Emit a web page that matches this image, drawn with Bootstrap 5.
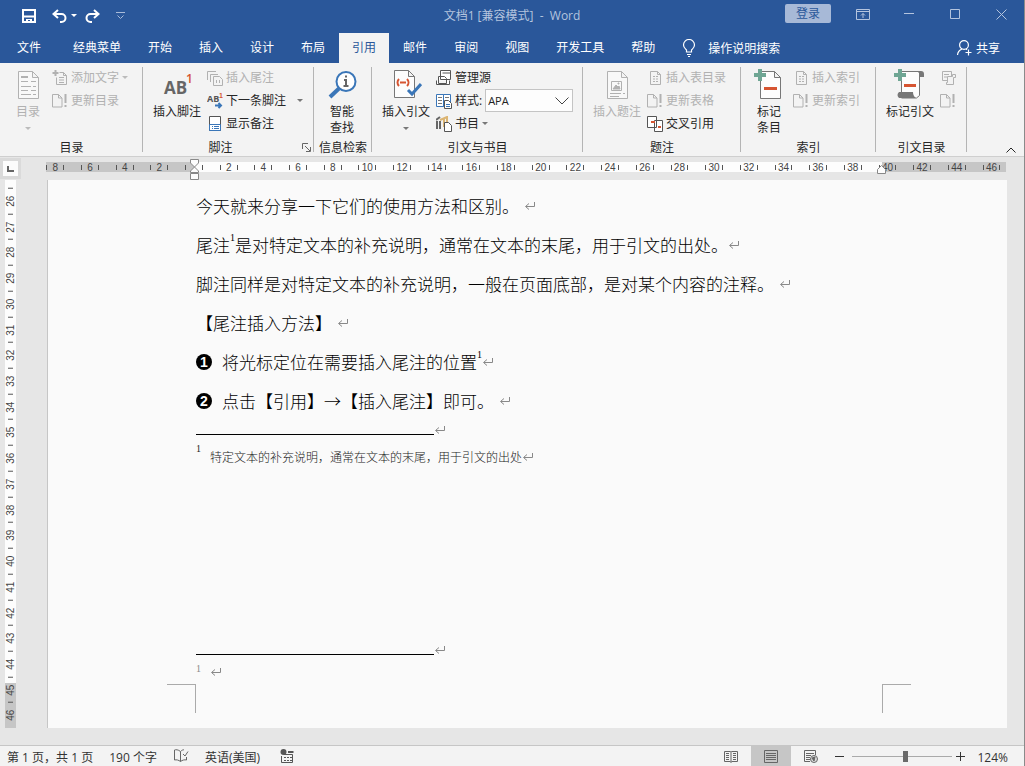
<!DOCTYPE html>
<html lang="zh-CN">
<head>
<meta charset="utf-8">
<meta name="viewport" content="width=device-width, initial-scale=1">
<title>文档1 [兼容模式] - Word</title>
<link href="https://cdn.jsdelivr.net/npm/bootstrap@5.3.0/dist/css/bootstrap.min.css" rel="stylesheet">
<style>
:root { --word-blue: #2a579a; --ribbon: #f3f3f3; --ink: #262626; --off: #b1b1b1; --line: #b4b4b4; }
body { font: 12px/16px "Open Sans", "Noto Sans CJK SC", sans-serif; color: var(--ink); background: #e6e6e6; }
button { border: 0; background: none; padding: 0; color: inherit; font: inherit; }
svg { display: block; flex: none; fill: none; }
svg:not([stroke]) { stroke: currentColor; }
.win { height: 100vh; overflow: hidden; border-right: 1px solid #8a8a8a; }

.titlebar { height: 31px; color: #b4c4de; background: var(--word-blue); }
.titlebar .side { flex: 1 1 0; height: 31px; }
.qat { color: #fff; }
.qat::before { content: ""; width: 22px; }
.login { width: 46px; height: 19px; background: #a7b9d7; color: var(--word-blue); border-radius: 2px; margin-right: 9px; }
.winbtn { width: 46px; height: 28px; display: grid; place-items: center; }

.tabs { height: 32px; padding-top: 2px; background: var(--word-blue); color: #fff; gap: 1px; }
.tabs .tab { padding: 0 13px; height: 30px; line-height: 29px; color: #fff; text-decoration: none; white-space: nowrap; }
.tabs .tab.file { padding: 0 18px 0 17px; }
.tabs .tab.active { background: var(--ribbon); color: var(--word-blue); }
.tabs .tell { gap: 12px; }
.tabs .share { margin-right: 11px; gap: 4px; }

.ribbon { height: 94px; background: var(--ribbon); border-bottom: 1px solid #cfcfcf; display: grid; grid-template-columns: 143px 171px 58px 211px 158px 135px 91px 1fr; }
.group { position: relative; padding-top: 3px; }
.group:not(:last-child)::after { content: ""; position: absolute; right: 0; top: 4px; bottom: 4px; width: 1px; background: var(--line); }
.tools { height: 72px; padding-left: 10px; gap: 6px; }
.tight .tools { padding-left: 4px; gap: 0; }
.caption { line-height: 20px; margin-bottom: -2px; text-align: center; }
.big { width: 48px; padding-top: 3px; white-space: nowrap; display: flex; flex-direction: column; align-items: center; gap: 3px; line-height: 16px; }
.small-tool { height: 23px; display: flex; align-items: center; gap: 3px; white-space: nowrap; }
.off { color: var(--off); }
.caret { display: inline-block; border: 3px solid transparent; border-top-color: #777; border-bottom: 0; }
.off .caret, .caret.off { border-top-color: #bbb; }
.qat .caret { border-top-color: #fff; }
.big .caret { margin-top: 4px; }
.launcher { position: absolute; right: 3px; bottom: 4px; }
.style-pick { width: 88px; height: 23px; font-size: 11px; padding: 0 2px; color: #222; border: 1px solid #c4c4c4; background: #fdfdfd url("data:image/svg+xml,%3Csvg xmlns='http://www.w3.org/2000/svg' width='14' height='8'%3E%3Cpath d='M.5.5 7 7 13.5.5' fill='none' stroke='%23444'/%3E%3C/svg%3E") no-repeat right 3px center; appearance: none; }
.fold { position: absolute; right: 8px; bottom: 3px; }

.hruler { height: 23px; padding: 5px 15px 0 38px; position: relative; }
.corner { position: absolute; left: 3px; top: 4px; width: 15px; height: 15px; background: #fcfcfc; box-shadow: 0 0 0 3px #dadada; }
.hscale { height: 10px; display: flex; font: 10px/11px "Liberation Sans", sans-serif; color: #444; background: linear-gradient(90deg, transparent 8px, #c6c6c6 8px, #c6c6c6 156px, #fdfdfd 156px, #fdfdfd calc(100% - 127px), #c6c6c6 calc(100% - 127px), #c6c6c6 calc(100% - 3px), transparent 0); }
.hscale span { flex: 1 1 0; text-align: center; background: linear-gradient(#555, #555) 25% 3px / 1px 5px no-repeat, linear-gradient(#555, #555) 75% 3px / 1px 5px no-repeat; }
.marker { position: absolute; top: 2px; left: 189px; }
.marker.end { left: auto; right: 137px; top: 8px; }

.work { min-height: 0; padding-bottom: 17px; }
.vscale { width: 11px; margin: 0 31px 0 5px; padding-top: 8px; display: flex; flex-direction: column; font: 10px/11px "Liberation Sans", sans-serif; color: #444; background: linear-gradient(0deg, #c6c6c6 45px, #fdfdfd 45px); }
.vscale span { flex: 1 1 0; writing-mode: vertical-rl; transform: rotate(180deg); text-align: center; background: linear-gradient(#555, #555) 50% 100% / 5px 1px no-repeat; }
.sheet { background: #fafafa; border-left: 1px solid #c6c6c6; margin-right: 17px; padding: 6px 0 15px 148px; color: #000; font-family: "Noto Sans CJK SC", sans-serif; font-weight: 300; overflow: hidden; }
.sheet p { margin: 0; font-size: 17px; line-height: 39px; white-space: nowrap; display: flex; align-items: center; }
.sheet sup { font: 10px/12px "Liberation Serif", serif; top: 0; align-self: flex-start; padding-top: 7px; }
.sheet .ret { color: #888; margin-left: 5px; }
.sheet sup + .ret { margin-left: 0; }
.disc { width: 16px; height: 16px; border-radius: 50%; background: #000; color: #fff; font: bold 14px/16px "Liberation Sans", sans-serif; text-align: center; margin-right: 10px; }
.notebar { display: flex; align-items: flex-end; height: 15px; color: #888; }
.notebar::before { content: ""; width: 238px; border-top: 1px solid #000; }
.sheet .note { font-size: 12px; line-height: 44px; color: #222; }
.sheet .note .ret { margin-left: 0; }
.sheet .note sup { padding-top: 8px; margin-right: 9px; }
.sheet .note.blank { height: 29px; padding-top: 4px; }
.sheet .note.blank sup { padding-top: 4px; color: #888; }
.cropmarks { display: flex; justify-content: space-between; margin: 0 96px 0 -29px; }
.cropmarks i { width: 29px; height: 29px; border: solid #aaa; border-width: 1px 1px 0 0; }
.cropmarks i:last-child { border-width: 1px 0 0 1px; }

.status { height: 21px; background: var(--ribbon); border-top: 1px solid #c6c6c6; padding: 0 16px 0 7px; white-space: nowrap; overflow: hidden; color: #333; }
.status .say { line-height: 24px; height: 20px; }
.status .view { width: 40px; height: 21px; display: grid; place-items: center; color: #666; }
.status .view.active { background: #c6c6c6; }
.zoomer { width: 100px; height: 12px; appearance: none; background: linear-gradient(#aaa, #aaa) 0 50% / 100% 1px no-repeat; }
.zoomer::-webkit-slider-thumb { appearance: none; width: 5px; height: 11px; background: #6a6a6a; }
</style>
</head>
<body>
<svg class="d-none" aria-hidden="true">
  <symbol id="ret" viewBox="0 0 12 10"><path d="M10.500 1v4.500H2M5 2.500l-3.500 3L5 8.500"/></symbol>
  <symbol id="doc" viewBox="0 0 16 16"><path d="M3.500 1.500h7l3 3v10h-10zM10.500 1.500v3h3M6 6.500h2M9 6.500h2M6 9h2M9 9h2M6 11.500h2M9 11.500h2"/></symbol>
  <symbol id="upd" viewBox="0 0 16 16"><path d="M.5 1.500h6l3.500 3.500v9H.5zM6.500 1.500V5H10"/><path stroke-width="2" d="M13.500 1v9M13.500 12v2"/></symbol>
</svg>
<div class="win d-flex flex-column">
  <header class="titlebar d-flex align-items-center">
    <div class="side qat d-flex align-items-center">
      <button aria-label="保存" class="me-3"><svg width="14" height="14"><path stroke-width="2" d="M1 1h12v12H1z"/><path stroke-width="2" d="M2 7.500h10"/><path fill="currentColor" stroke="none" d="M4 10h6v3H8v-2H6v2H4z"/></svg></button>
      <button aria-label="撤消" class="me-1"><svg width="15" height="14"><path stroke-width="2" d="M6 1 1.500 5 6 9M2 5h7.500a4 4 0 0 1 0 8H8"/></svg></button>
      <button aria-label="撤消选项" class="d-flex"><span class="caret"></span></button>
      <button aria-label="恢复" class="ms-2"><svg width="15" height="14"><path stroke-width="2" d="M9 1l4.500 4L9 9M13 5H5.500a4 4 0 0 0 0 8H7"/></svg></button>
      <button aria-label="自定义快速访问工具栏" class="ms-3"><svg width="9" height="8" stroke="#a9bbd9"><path d="M0 .5h9M1.500 3.500l3 3 3-3"/></svg></button>
    </div>
    <div>文档1 [兼容模式]&nbsp; -&nbsp; Word</div>
    <div class="side d-flex justify-content-end">
      <button class="login mt-1">登录</button>
      <button class="winbtn" aria-label="功能区显示选项"><svg width="14" height="11"><path d="M.5.5h13v10H.5zM1 2.500h12M7 9V4.500M5 6.500l2-2 2 2"/></svg></button>
      <button class="winbtn" aria-label="最小化"><svg width="10" height="2"><path d="M0 .5h10"/></svg></button>
      <button class="winbtn" aria-label="最大化"><svg width="10" height="10"><path d="M.5.5h9v9h-9z"/></svg></button>
      <button class="winbtn" aria-label="关闭"><svg width="11" height="11"><path d="m.5.5 10 10m0-10-10 10"/></svg></button>
    </div>
  </header>

  <nav class="tabs d-flex">
    <a class="tab file" href="#">文件</a><a class="tab" href="#">经典菜单</a><a class="tab" href="#">开始</a><a class="tab" href="#">插入</a><a class="tab" href="#">设计</a><a class="tab" href="#">布局</a><a class="tab active" href="#">引用</a><a class="tab" href="#">邮件</a><a class="tab" href="#">审阅</a><a class="tab" href="#">视图</a><a class="tab" href="#">开发工具</a><a class="tab" href="#">帮助</a>
    <a class="tab tell d-flex align-items-center" href="#"><svg width="14" height="18" viewBox="0 0 14 18"><path stroke-width="1.200" d="M4.500 13v-2C3 9.500 1.500 8.500 1.500 6a5.500 5.500 0 0 1 11 0c0 2.500-1.500 3.500-3 5v2zM5 15.500h4M6 17.500h2"/></svg><span>操作说明搜索</span></a>
    <a class="tab share ms-auto d-flex align-items-center" href="#"><svg width="15" height="16" viewBox="0 0 15 16"><circle cx="7" cy="5" r="4.400" stroke-width="1.200"/><path stroke-width="1.200" d="M.5 15c.3-3.500 2-5 4.500-6M9 9l1 .8M11.500 9.500v6M8.500 12.500h6"/></svg><span>共享</span></a>
  </nav>

  <div class="ribbon">
    <section class="group tight">
      <div class="tools d-flex">
        <button class="big off"><svg width="32" height="32"><path fill="#f8f8f8" d="M6.500 2.500h14l6 6v21h-20zM20.500 2.500v6h6"/><path d="M9 12.500h7M19 12.500h5M9 17.500h10M21 17.500h3M9 21.500h7M19 21.500h5M9 25.500h10M21 25.500h3"/><path stroke-width="2" d="M9 8h7"/></svg><span>目录</span><span class="caret"></span></button>
        <div class="off">
          <button class="small-tool"><svg width="16" height="16"><path stroke-width="2" d="M3.500 0v6M.5 3h6"/><path d="M4.500 7.500v7h10v-9l-3-3h-4M11.500 2.500v3h3M7 7.500h5M7 10h5M7 12.500h5"/></svg>添加文字<span class="caret"></span></button>
          <button class="small-tool"><svg width="16" height="16"><use href="#upd"/></svg>更新目录</button>
        </div>
      </div>
      <div class="caption">目录</div>
    </section>

    <section class="group">
      <div class="tools d-flex">
        <button class="big"><svg width="32" height="32" stroke="none"><text x="3" y="25" font-family="Open Sans" font-weight="700" font-size="17" fill="#666">AB</text><text x="25" y="14" font-family="Open Sans" font-size="12" font-weight="600" fill="#d65532">1</text></svg><span>插入脚注</span></button>
        <div>
          <button class="small-tool off"><svg width="16" height="16"><path d="M.5 10V1.500H9M3.500 12V4.500H11M6.500 6.500h6l3 3v6h-9zM9.500 10v3M12.500 10v3"/></svg>插入尾注</button>
          <button class="small-tool"><svg width="16" height="16"><text x="0" y="9" stroke="none" font-family="Open Sans" font-weight="700" font-size="9" fill="#555">AB</text><text x="12" y="5" stroke="none" font-family="Liberation Sans" font-weight="700" font-size="7" fill="#d65532">1</text><path stroke="#3a76b8" stroke-width="2" d="M8 12.500h6M11.500 10 14 12.500 11.500 15"/></svg>下一条脚注<span class="caret ms-2"></span></button>
          <button class="small-tool"><svg width="16" height="16"><path stroke="#555" fill="#fff" d="M2.500.5h11v14h-11z"/><path stroke="#3a76b8" d="M2.500 8.500v6h11v-6zM5 10.500h1M7 10.500h5M5 12.500h1M7 12.500h5"/></svg>显示备注</button>
        </div>
      </div>
      <div class="caption me-3">脚注</div>
      <button class="launcher" aria-label="脚注和尾注"><svg width="9" height="9" stroke="#666"><path d="M.5 6V.5H6M3 3l5 5M8.500 4v4.500H4"/></svg></button>
    </section>

    <section class="group tight">
      <div class="tools d-flex"><button class="big"><svg width="32" height="32"><circle cx="20" cy="12.500" r="9.500" stroke="#3a76b8" stroke-width="2" fill="#fff"/><path stroke="#3a76b8" stroke-width="4" d="m13 19.500-9 8.500"/><path stroke="#666" stroke-width="2" d="M20 6.500v2M18 11h2v6M17.500 17h5"/></svg><span>智能<br>查找</span></button></div>
      <div class="caption">信息检索</div>
    </section>

    <section class="group">
      <div class="tools d-flex">
        <button class="big"><svg width="32" height="32"><path stroke="#777" fill="#fdfdfd" d="M4.500 1.500h14l6 6v21h-20zM18.500 1.500v6h6"/><path stroke="#d65532" stroke-width="2" d="M9 10c-2 2-2 5 0 7M17 10c2 2 2 5 0 7M10 13.500h6"/><path stroke="#3a76b8" stroke-width="3" d="m18 21 4 4 9-10"/></svg><span>插入引文</span><span class="caret"></span></button>
        <div>
          <button class="small-tool"><svg width="16" height="16" stroke="#555"><path fill="#fff" d="M4.500.5h10v9h-10zM2.500 6.500h6l2 2v5h-8zM.5 10.500v4h13v-4M6.500 3h8"/></svg>管理源</button>
          <div class="small-tool"><svg width="16" height="16"><path stroke="#3a76b8" fill="#fff" d="M.5 1.500h7v12h-7zM7.500 1.500h7v12h-7z"/><path stroke="#777" d="M2 4.500h4M2 7.500h4M2 10.500h4M9 4.500h4"/><path stroke="#555" fill="#fff" d="M8.500 7.500h4l3 3v5h-7z"/><path stroke="#3a76b8" d="M10 11.500h4M10 13.500h4"/></svg><label for="citeStyle">样式:</label><select id="citeStyle" class="style-pick"><option>APA</option></select></div>
          <button class="small-tool"><svg width="16" height="16"><path stroke="#666" stroke-width="2" d="M1 5v8M4 5v8M0 4l4-3"/><path stroke="#dcb573" stroke-width="2" d="M4 4l7-3v5M8 3v8M11 1v5"/><path stroke="#555" fill="#fff" d="M8.500 6.500h4l3 3v6h-7z"/></svg>书目<span class="caret"></span></button>
        </div>
      </div>
      <div class="caption">引文与书目</div>
    </section>

    <section class="group">
      <div class="tools d-flex">
        <button class="big off"><svg width="32" height="32"><path fill="#f8f8f8" d="M6.500 2.500h14l6 6v21h-20zM20.500 2.500v6h6M10.500 12.500h10v9h-10z"/><path d="M9 24.500h11M22 24.500h2M9 27.500h9"/><path fill="currentColor" d="m12 20 3-4 2 2 1-1 1 3zM17 14h1v1h-1z"/></svg><span>插入题注</span></button>
        <div>
          <button class="small-tool off"><svg width="16" height="16"><use href="#doc"/></svg>插入表目录</button>
          <button class="small-tool off"><svg width="16" height="16"><use href="#upd"/></svg>更新表格</button>
          <button class="small-tool"><svg width="16" height="16"><path stroke="#555" fill="#fff" d="M7.500 4.500h8v11h-8zM.5.5h9v11h-9z"/><path stroke="#d65532" stroke-width="2" d="M4 6h4M11 11h3"/></svg>交叉引用</button>
        </div>
      </div>
      <div class="caption">题注</div>
    </section>

    <section class="group tight">
      <div class="tools d-flex">
        <button class="big"><svg width="32" height="32"><path stroke="#777" fill="#fdfdfd" d="M7.500 2.500h14l6 6v21h-20zM21.500 2.500v6h6"/><path stroke="#d65532" stroke-width="3" d="M11 19.500h13"/><path stroke="#6fa694" stroke-width="4" d="M7 0v12M1 6h12"/></svg><span>标记<br>条目</span></button>
        <div class="off">
          <button class="small-tool"><svg width="16" height="16"><use href="#doc"/></svg>插入索引</button>
          <button class="small-tool"><svg width="16" height="16"><use href="#upd"/></svg>更新索引</button>
        </div>
      </div>
      <div class="caption">索引</div>
    </section>

    <section class="group">
      <div class="tools d-flex">
        <button class="big"><svg width="32" height="32"><path stroke="#777" fill="#fdfdfd" d="M7.500 2.500h18v24l-3 2.500h-15z"/><path stroke="none" fill="#777" d="M23 2h4q3 0 3 3v3h-4V5zM5 23h14q0 4 3 6H5q-3-3 0-6z"/><path stroke="#d65532" stroke-width="3" d="M10 16.500h12"/><path stroke="#6fa694" stroke-width="4" d="M6 0v12M0 6h12"/></svg><span>标记引文</span></button>
        <div class="off">
          <button class="small-tool" aria-label="插入引文目录"><svg width="16" height="16"><path d="M2.500 1.500h9v9h-9zM4 4.500h5M4 7h3"/><path fill="#f3f3f3" d="M7.500 6.500h5v-2h3v3h-2v7h-7v-2h1z"/></svg></button>
          <button class="small-tool" aria-label="更新引文目录"><svg width="16" height="16"><use href="#upd"/></svg></button>
        </div>
      </div>
      <div class="caption">引文目录</div>
    </section>
    <div class="group"><button class="fold" aria-label="折叠功能区"><svg width="10" height="6"><path d="m.5 5.500 4.500-4.500 4.500 4.500"/></svg></button></div>
  </div>

  <div class="hruler">
    <div class="corner"><svg width="15" height="15"><path stroke="#666" stroke-width="2" d="M5 5v5h6"/></svg></div>
    <div class="hscale" id="hscale"></div>
    <svg class="marker" width="11" height="22" stroke="#888"><path fill="#fdfdfd" d="M1.500.5h8V4L5.500 8 1.500 4zM5.500 8l4 4v1.500h-8V12zM1.500 14.500h8v6h-8z"/></svg>
    <svg class="marker end" width="11" height="9" stroke="#888"><path fill="#fdfdfd" d="m5.500.5 4 4v4h-8v-4z"/></svg>
  </div>

  <main class="work d-flex flex-grow-1">
    <div class="vscale" id="vscale"></div>
    <article class="sheet flex-grow-1 d-flex flex-column">
      <p>今天就来分享一下它们的使用方法和区别。<svg class="ret" width="12" height="10"><use href="#ret"/></svg></p>
      <p>尾注<sup>1</sup>是对特定文本的补充说明，通常在文本的末尾，用于引文的出处。<svg class="ret" width="12" height="10"><use href="#ret"/></svg></p>
      <p>脚注同样是对特定文本的补充说明，一般在页面底部，是对某个内容的注释。<svg class="ret" width="12" height="10"><use href="#ret"/></svg></p>
      <p>【尾注插入方法】<svg class="ret" width="12" height="10"><use href="#ret"/></svg></p>
      <p><span class="disc">1</span>将光标定位在需要插入尾注的位置<sup>1</sup><svg class="ret" width="12" height="10"><use href="#ret"/></svg></p>
      <p><span class="disc">2</span>点击【引用】→【插入尾注】即可。<svg class="ret" width="12" height="10"><use href="#ret"/></svg></p>
      <div class="notebar"><svg width="12" height="10"><use href="#ret"/></svg></div>
      <p class="note"><sup>1</sup>特定文本的补充说明，通常在文本的末尾，用于引文的出处<svg class="ret" width="12" height="10"><use href="#ret"/></svg></p>
      <div class="notebar mt-auto"><svg width="12" height="10"><use href="#ret"/></svg></div>
      <p class="note blank"><sup>1</sup><svg class="ret" width="12" height="10"><use href="#ret"/></svg></p>
      <div class="cropmarks"><i></i><i></i></div>
    </article>
  </main>

  <footer class="status d-flex align-items-center">
    <span class="say me-3">第 1 页，共 1 页</span>
    <span class="say me-3">190 个字</span>
    <button class="me-3" aria-label="校对"><svg width="16" height="14" stroke="#666"><path d="M7.500 2.500C5 .5 3 .5 1.500 1v10c2-.5 4 0 6 1.500V2.500C9 1 10 .8 11 .8M7.500 12.500c2-1.500 4-2 6-1.500V8M10 5l2 2 3-4.500"/></svg></button>
    <span class="say me-3">英语(美国)</span>
    <button class="ms-1" aria-label="宏"><svg width="14" height="14"><circle cx="3.500" cy="3" r="3" fill="#555" stroke="none"/><path stroke="#555" d="M1.500 7v6.500h11V5.500H4"/><path stroke="#555" stroke-width="2" d="M8 3h5.500"/><path stroke="#555" stroke-dasharray="2 1" d="M4 8.500h8M4 11.500h8"/></svg></button>
    <div class="ms-auto d-flex align-items-center">
      <button class="view" aria-label="阅读视图"><svg width="14" height="13"><path d="M6.500 1.500h-6v10h6M7.500 1.500h6v10h-6M7 1v12M2 3.500h3M2 5.500h3M2 7.500h3M2 9.500h3M9 3.500h3M9 5.500h3M9 7.500h3M9 9.500h3"/></svg></button>
      <button class="view active" aria-label="页面视图"><svg width="14" height="13"><path d="M.5.5h13v12H.5zM2 3.500h10M2 5.500h10M2 7.500h10M2 9.500h10"/></svg></button>
      <button class="view" aria-label="Web 版式视图"><svg width="14" height="13"><path d="M6 11.500H.5V.5h11V5M2 3.500h8M2 5.500h5M2 7.500h4M2 9.500h4"/><circle cx="10" cy="9" r="3.500" fill="#ddd"/><path fill="#666" d="m8 8 3-1-1 4z"/></svg></button>
      <button class="ms-1 me-2" aria-label="缩小"><svg width="9" height="9"><path d="M0 4.500h9"/></svg></button>
      <input class="zoomer" type="range" min="0" max="100" value="53" aria-label="显示比例">
      <button class="ms-1 me-2 pe-1" aria-label="放大"><svg width="9" height="9"><path d="M0 4.500h9M4.500 0v9"/></svg></button>
      <span class="say">124%</span>
    </div>
  </footer>
</div>
<script src="https://cdn.jsdelivr.net/npm/bootstrap@5.3.0/dist/js/bootstrap.bundle.min.js"></script>
<script>
const fill = (id, from, to, step) => {
  const scale = document.getElementById(id);
  for (let n = from; n <= to; n += step) {
    const cell = document.createElement("span");
    cell.textContent = n === 0 ? "" : Math.abs(n);
    scale.append(cell);
  }
};
fill("hscale", -8, 46, 2);
fill("vscale", 26, 46, 1);
</script>
</body>
</html>
